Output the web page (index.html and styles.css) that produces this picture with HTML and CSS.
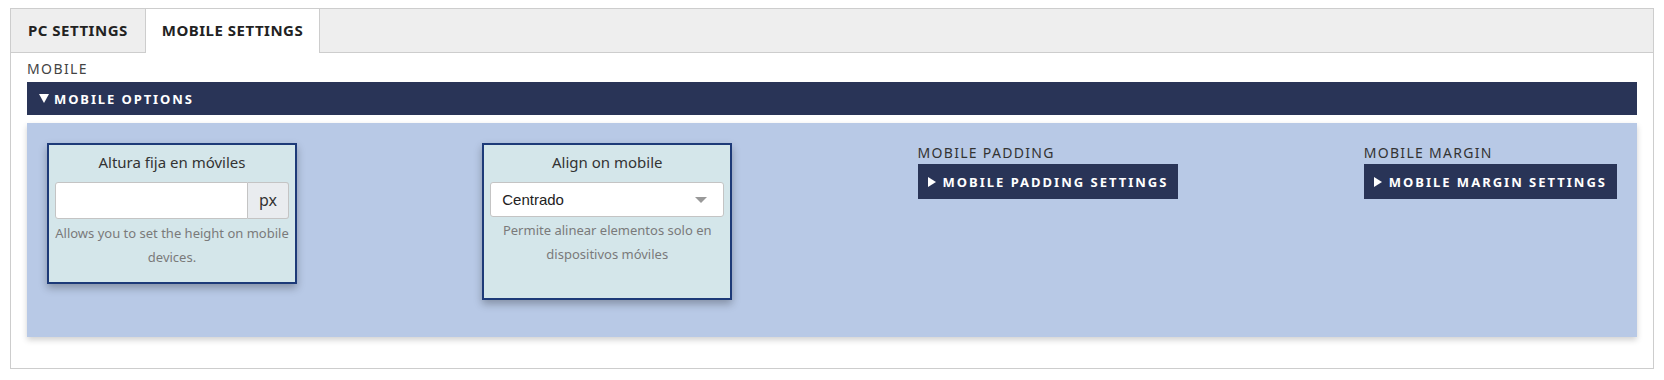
FILE: index.html
```html
<!DOCTYPE html>
<html lang="es">
<head>
<meta charset="utf-8">
<title>Mobile Settings</title>
<link rel="stylesheet" href="styles.css">
</head>
<body>
<div class="page">
  <div class="box">
    <div class="tabs">
      <div class="tab">PC SETTINGS</div>
      <div class="tab tab-active">MOBILE SETTINGS</div>
    </div>
    <div class="content">
      <div class="section-label">MOBILE</div>
      <div class="section-bar"><span class="tri-down"></span>MOBILE OPTIONS</div>
      <div class="panel">
        <div class="card card-short">
          <div class="card-title">Altura fija en móviles</div>
          <div class="input-group">
            <div class="input"></div>
            <div class="addon">px</div>
          </div>
          <div class="help">Allows you to set the height on mobile devices.</div>
        </div>
        <div class="card card-tall">
          <div class="card-title">Align on mobile</div>
          <div class="select">
            <span>Centrado</span>
            <span class="caret"></span>
          </div>
          <div class="help">Permite alinear elementos solo en dispositivos móviles</div>
        </div>
        <div class="group">
          <div class="group-label">MOBILE PADDING</div>
          <div class="group-btn"><span class="tri-right"></span>MOBILE PADDING SETTINGS</div>
        </div>
        <div class="group">
          <div class="group-label">MOBILE MARGIN</div>
          <div class="group-btn"><span class="tri-right"></span>MOBILE MARGIN SETTINGS</div>
        </div>
      </div>
    </div>
  </div>
</div>
</body>
</html>
```
FILE: styles.css
```css
* { box-sizing: border-box; }
html, body { margin: 0; background: #fff; }
body { font-family: "Noto Sans", "Open Sans", "Liberation Sans", sans-serif; color: #333; }
.page { padding: 8px 10px; }
.box { border: 1px solid #cdcdcd; }
.tabs { display: flex; background: #eeeeee; border-bottom: 1px solid #cdcdcd; height: 44px; }
.tab { height: 43px; line-height: 43px; padding: 0 17px; font-size: 15px; font-weight: 700; letter-spacing: 0.5px; color: #222; border-right: 1px solid #cdcdcd; }
.tab-active { background: #fff; height: 44px; margin-bottom: -1px; padding: 0 16px; }
.content { padding: 6px 16px 31px 16px; }
.section-label { font-size: 14px; line-height: 20px; letter-spacing: 1.4px; color: #444; margin-bottom: 3px; }
.section-bar { display: flex; align-items: center; background: #293457; color: #fff; height: 33px; padding: 0 12px; font-size: 13px; font-weight: 700; letter-spacing: 1.9px; }
.tri-down { width: 0; height: 0; border-left: 5px solid transparent; border-right: 5px solid transparent; border-top: 9px solid #fff; margin-right: 5px; }
.panel { margin-top: 8px; background: #b8c9e6; padding: 20px 20px 37px 20px; display: flex; justify-content: space-between; align-items: flex-start; box-shadow: 0 3px 6px rgba(0,0,0,0.18); }
.card { width: 250px; border: 2px solid #1d3a78; background: #d4e6ea; padding: 0 6px; box-shadow: 0 4px 8px rgba(0,0,0,0.28); text-align: center; }
.card-short { padding-bottom: 13px; }
.card-tall { padding-bottom: 32px; }
.card-title { font-size: 15px; line-height: 35px; color: #333; margin-bottom: 2px; }
.input-group { display: flex; height: 37px; }
.input { flex: 1; background: #fff; border: 1px solid #c4c4c4; border-radius: 3px 0 0 3px; }
.addon { width: 41px; background: #e9ecef; border: 1px solid #c4c4c4; border-left: none; border-radius: 0 3px 3px 0; font-size: 16px; line-height: 35px; color: #333; text-align: center; }
.help { font-size: 13px; line-height: 24px; color: #7a7a7a; margin-top: 2px; }
.card-tall .help { margin-top: 1px; }
.select { height: 35px; background: #fff; border: 1px solid #c4c4c4; border-radius: 3px; display: flex; align-items: center; justify-content: space-between; padding: 0 16px 0 11px; font-family: "Liberation Sans", Arial, sans-serif; font-size: 15px; color: #222; text-align: left; }
.caret { width: 0; height: 0; border-left: 6px solid transparent; border-right: 6px solid transparent; border-top: 6px solid #999; }
.group { display: flex; flex-direction: column; align-items: flex-start; }
.group-label { font-size: 14px; line-height: 20px; letter-spacing: 1.3px; color: #333; margin-bottom: 1px; }
.group-btn { display: flex; align-items: center; background: #293457; color: #fff; height: 35px; padding: 0 10px; font-size: 13px; font-weight: 700; letter-spacing: 2px; white-space: nowrap; }
.tri-right { width: 0; height: 0; border-top: 5px solid transparent; border-bottom: 5px solid transparent; border-left: 8px solid #fff; margin-right: 7px; }
```
